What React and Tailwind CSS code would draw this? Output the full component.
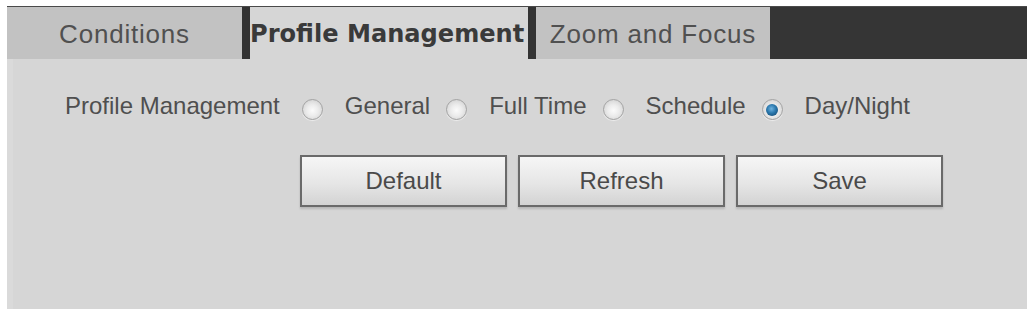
import React from "react";

function Radio({ checked }) {
  return (
    <span className="mt-[8px] flex h-[21px] w-[21px] shrink-0 items-center justify-center rounded-full border border-[#a3a3a3] bg-[radial-gradient(circle_at_50%_55%,#fbfbfb_0%,#ececec_40%,#c9c9c9_100%)] shadow-[0_1px_1px_rgba(255,255,255,0.6)]">
      {checked && (
        <span className="block h-[12px] w-[12px] rounded-full bg-[radial-gradient(circle_at_45%_40%,#6fb3e0_0%,#2a77ac_45%,#123f63_100%)]" />
      )}
    </span>
  );
}

function Btn({ children }) {
  return (
    <div className="flex h-[52px] w-[207px] items-center justify-center border-2 border-[#6a6a6a] bg-[linear-gradient(#f6f6f6,#e6e6e6_55%,#d3d3d3)] text-[24px] text-[#4a4a4a] shadow-[0_2px_2px_rgba(0,0,0,0.15)]">
      {children}
    </div>
  );
}

export default function App() {
  const body = { fontFamily: '"Liberation Sans", Arial, sans-serif' };
  return (
    <div className="h-[314px] w-[1029px] overflow-hidden bg-white pl-[7px] pt-[6px]" style={body}>
      <div className="flex h-[303px] w-[1020px] flex-col border-t border-[#4a4a4a] bg-[#d6d6d6]">
        {/* Tab bar */}
        <div className="flex h-[52px] shrink-0">
          <div className="flex h-full w-[235px] items-center justify-center bg-[#c2c2c2] pt-[2px] text-[26px] tracking-[0.8px] text-[#505050]">
            Conditions
          </div>
          <div
            className="flex h-full w-[286px] items-center whitespace-nowrap border-l-[8px] border-[#333333] bg-[#d6d6d6] pt-[2px] text-[24.1px] font-bold text-[#3a3a3a]"
            style={{ fontFamily: '"DejaVu Sans", Verdana, sans-serif' }}
          >
            Profile Management
          </div>
          <div className="flex h-full w-[242px] items-center justify-center border-l-[8px] border-[#333333] bg-[#c2c2c2] pt-[2px] text-[26px] tracking-[0.8px] text-[#505050]">
            Zoom and Focus
          </div>
          <div className="h-full flex-1 bg-[#353535]" />
        </div>

        {/* Body */}
        <div className="flex flex-1 flex-col border-l-[6px] border-[#dadada] pl-[52px] pt-[32px]">
          <div className="flex h-[30px] items-start text-[24px] leading-[30px] text-[#4f4f4f]">
            <span>Profile Management</span>
            <span className="ml-[22px]"><Radio /></span>
            <span className="ml-[22px]">General</span>
            <span className="ml-[16px]"><Radio /></span>
            <span className="ml-[22px]">Full Time</span>
            <span className="ml-[16px]"><Radio /></span>
            <span className="ml-[22px]">Schedule</span>
            <span className="ml-[16px]"><Radio checked /></span>
            <span className="ml-[22px]">Day/Night</span>
          </div>
          <div className="ml-[235px] mt-[34px] flex gap-[11px]">
            <Btn>Default</Btn>
            <Btn>Refresh</Btn>
            <Btn>Save</Btn>
          </div>
        </div>
      </div>
    </div>
  );
}
